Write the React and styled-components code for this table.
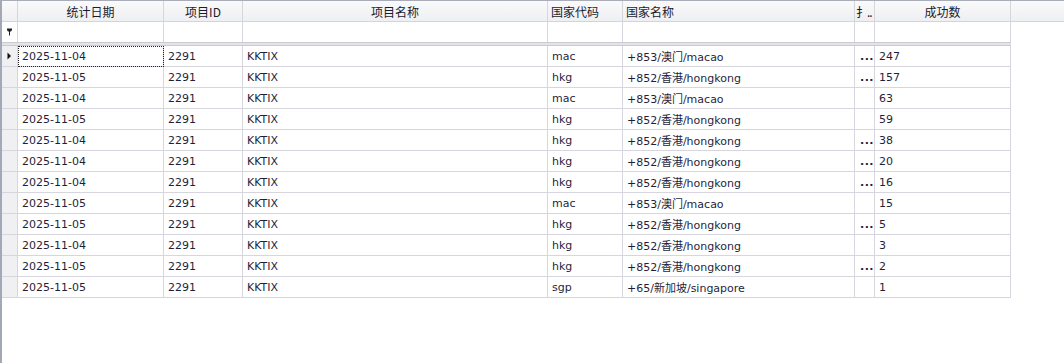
import React from 'react'
import styled, { createGlobalStyle } from 'styled-components'

const GlobalStyle = createGlobalStyle`
  html, body {
    margin: 0;
    padding: 0;
    background: #fff;
  }
  * {
    box-sizing: border-box;
  }
`

const COLS = '16px 146px 79px 305px 75px 232px 20px 136px'

const Grid = styled.div`
  height: 363px;
  border-left: 2px solid #a4a7b5;
  border-top: 1px solid #a9adb9;
  background: #fff;
  font-family: "DejaVu Sans", "Noto Sans CJK SC", sans-serif;
  font-size: 11px;
  color: #1f1f3b;
  overflow: hidden;
`

const HeaderRow = styled.div`
  display: grid;
  grid-template-columns: ${COLS} 1fr;
  height: 21px;
  background: linear-gradient(#fafafb, #eeeff2);
  border-bottom: 1px solid #d3d3da;
`

const HeaderCell = styled.div`
  display: flex;
  align-items: center;
  justify-content: ${p => (p.$align === 'left' ? 'flex-start' : 'center')};
  padding: 0 ${p => (p.$tight ? 1 : 3)}px;
  border-right: 1px solid ${p => (p.$last ? 'transparent' : '#d6d6dd')};
  font-family: "Noto Sans CJK SC", "DejaVu Sans", sans-serif;
  font-size: 12px;
  letter-spacing: ${p => (p.$tight ? '-1px' : 'normal')};
  color: #1b1b2d;
  white-space: nowrap;
  overflow: hidden;
`

const Row = styled.div`
  display: grid;
  grid-template-columns: ${COLS};
  width: 1009px;
  height: ${p => p.$h || 21}px;
`

const Cell = styled.div`
  display: flex;
  align-items: center;
  padding: 0 4px;
  border-right: 1px solid #d7d6de;
  border-bottom: 1px solid #d7d6de;
  white-space: nowrap;
  overflow: hidden;
  outline: ${p => (p.$focused ? '1px dotted #222' : 'none')};
  outline-offset: -1px;
`

const FilterCell = styled.div`
  display: flex;
  align-items: center;
  justify-content: center;
  border-right: 1px solid #d7d6de;
`

const Indicator = styled.div`
  display: flex;
  align-items: center;
  justify-content: center;
  background: #f0f0f3;
  border-right: 1px solid #d7d6de;
  border-bottom: 1px solid #d7d6de;
`

const Separator = styled.div`
  width: 1009px;
  height: 4px;
  border-top: 1px solid #cacad2;
  border-bottom: 1px solid #cacad2;
  background: #e3e3e8;
`

const Dots = styled.span`
  padding-left: 1px;
  letter-spacing: 0.5px;
  font-weight: bold;
`

const rows = [
  ['2025-11-04', 'mac', '+853/澳门/macao', true, 247],
  ['2025-11-05', 'hkg', '+852/香港/hongkong', true, 157],
  ['2025-11-04', 'mac', '+853/澳门/macao', false, 63],
  ['2025-11-05', 'hkg', '+852/香港/hongkong', false, 59],
  ['2025-11-04', 'hkg', '+852/香港/hongkong', true, 38],
  ['2025-11-04', 'hkg', '+852/香港/hongkong', true, 20],
  ['2025-11-04', 'hkg', '+852/香港/hongkong', true, 16],
  ['2025-11-05', 'mac', '+853/澳门/macao', false, 15],
  ['2025-11-05', 'hkg', '+852/香港/hongkong', true, 5],
  ['2025-11-04', 'hkg', '+852/香港/hongkong', false, 3],
  ['2025-11-05', 'hkg', '+852/香港/hongkong', true, 2],
  ['2025-11-05', 'sgp', '+65/新加坡/singapore', false, 1]
]

function PinIcon () {
  return (
    <svg width='7' height='8' viewBox='0 0 7 8'>
      <path d='M1 0.5h5v1.5l-1 1.5h-3l-1-1.5z' fill='#222' />
      <rect x='3' y='3' width='1' height='4.5' fill='#222' />
    </svg>
  )
}

function Arrow () {
  return (
    <svg width='5' height='8' viewBox='0 0 5 8'>
      <path d='M0.5 0.5L4 4L0.5 7.5z' fill='#111' />
    </svg>
  )
}

export default function App () {
  return (
    <>
      <GlobalStyle />
      <Grid>
        <HeaderRow>
          <HeaderCell />
          <HeaderCell>统计日期</HeaderCell>
          <HeaderCell>项目ID</HeaderCell>
          <HeaderCell>项目名称</HeaderCell>
          <HeaderCell $align='left'>国家代码</HeaderCell>
          <HeaderCell $align='left'>国家名称</HeaderCell>
          <HeaderCell $align='left' $tight>扌..</HeaderCell>
          <HeaderCell>成功数</HeaderCell>
          <HeaderCell $last />
        </HeaderRow>

        <Row $h={20}>
          <FilterCell><PinIcon /></FilterCell>
          <FilterCell />
          <FilterCell />
          <FilterCell />
          <FilterCell />
          <FilterCell />
          <FilterCell />
          <FilterCell />
        </Row>
        <Separator />

        {rows.map(([date, code, country, dots, count], i) => (
          <Row key={i}>
            <Indicator>{i === 0 && <Arrow />}</Indicator>
            <Cell $focused={i === 0}>{date}</Cell>
            <Cell>2291</Cell>
            <Cell>KKTIX</Cell>
            <Cell>{code}</Cell>
            <Cell>{country}</Cell>
            <Cell>{dots && <Dots>...</Dots>}</Cell>
            <Cell>{count}</Cell>
          </Row>
        ))}
      </Grid>
    </>
  )
}
